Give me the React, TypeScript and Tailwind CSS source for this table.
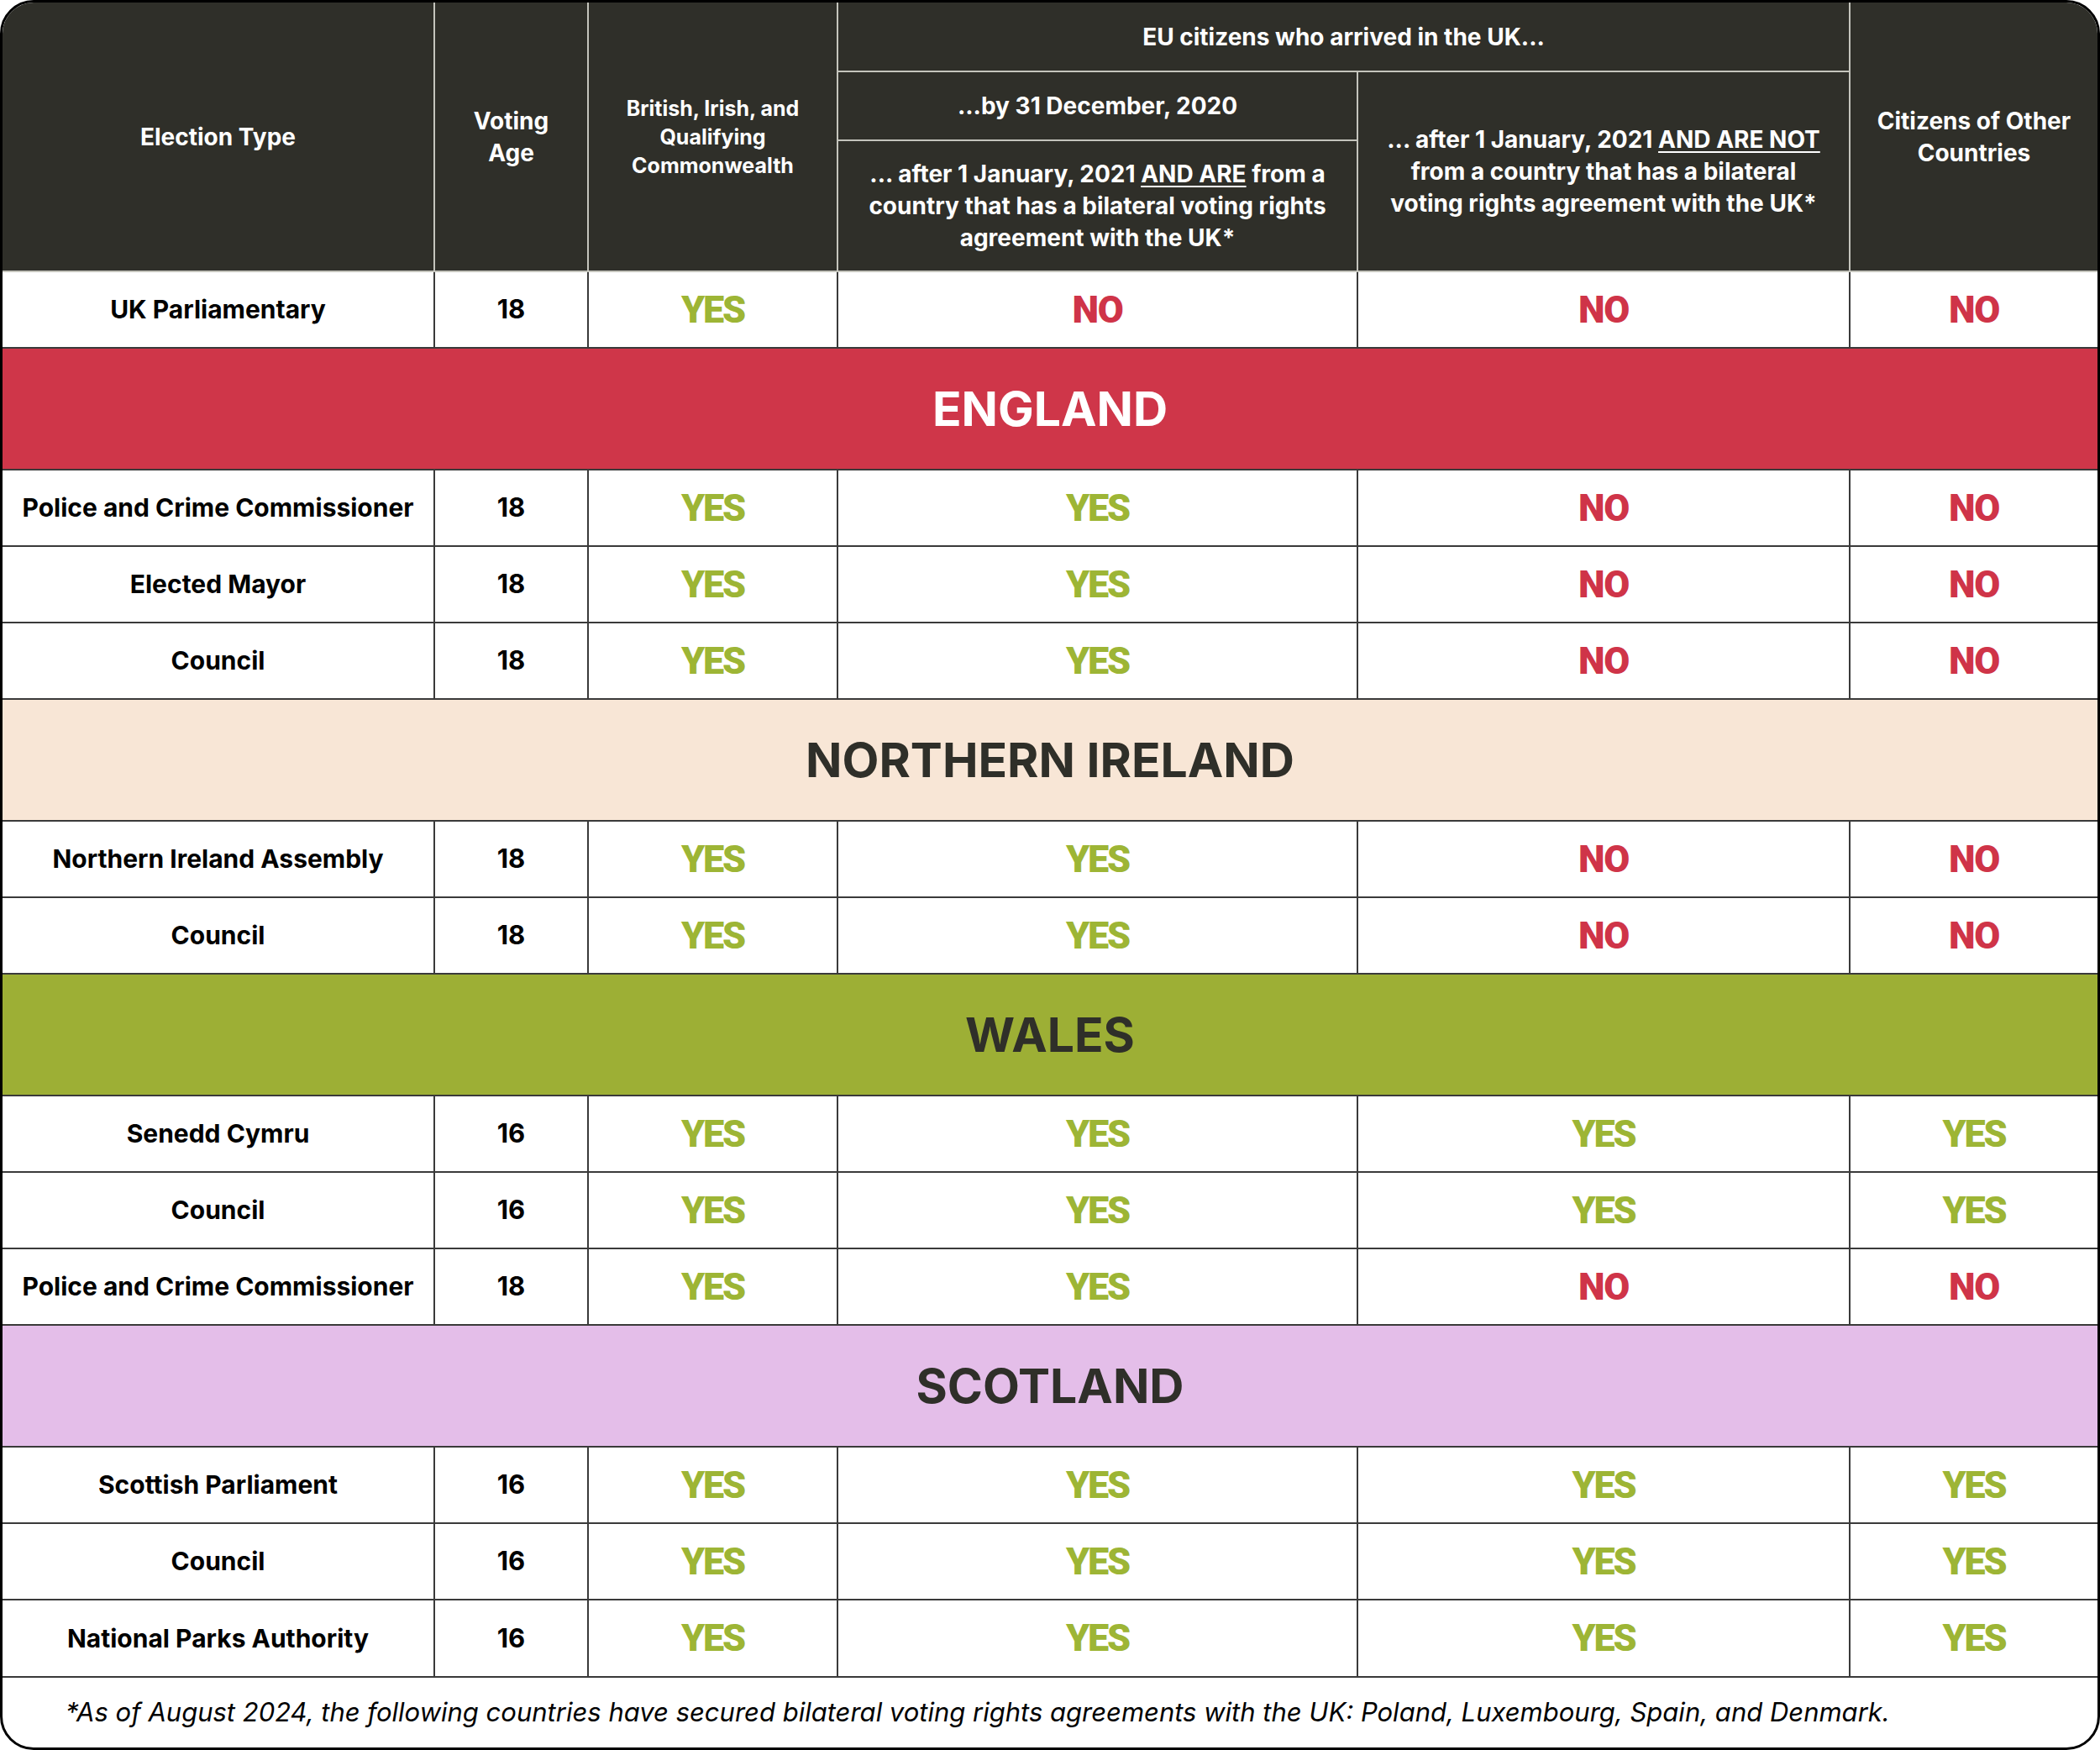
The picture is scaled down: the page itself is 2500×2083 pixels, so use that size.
import React from 'react';

type Vote = 'Y' | 'N';

interface DataRow {
  label: string;
  age: number;
  votes: Vote[];
}

interface Section {
  title?: string;
  band?: string;
  ink?: string;
  rows: DataRow[];
}

const sections: Section[] = [
  { rows: [{ label: 'UK Parliamentary', age: 18, votes: ['Y', 'N', 'N', 'N'] }] },
  {
    title: 'ENGLAND',
    band: 'bg-[#cf3649]',
    ink: 'text-white',
    rows: [
      { label: 'Police and Crime Commissioner', age: 18, votes: ['Y', 'Y', 'N', 'N'] },
      { label: 'Elected Mayor', age: 18, votes: ['Y', 'Y', 'N', 'N'] },
      { label: 'Council', age: 18, votes: ['Y', 'Y', 'N', 'N'] },
    ],
  },
  {
    title: 'NORTHERN IRELAND',
    band: 'bg-[#f8e6d6]',
    ink: 'text-[#2f2f29]',
    rows: [
      { label: 'Northern Ireland Assembly', age: 18, votes: ['Y', 'Y', 'N', 'N'] },
      { label: 'Council', age: 18, votes: ['Y', 'Y', 'N', 'N'] },
    ],
  },
  {
    title: 'WALES',
    band: 'bg-[#9daf35]',
    ink: 'text-[#2f2f29]',
    rows: [
      { label: 'Senedd Cymru', age: 16, votes: ['Y', 'Y', 'Y', 'Y'] },
      { label: 'Council', age: 16, votes: ['Y', 'Y', 'Y', 'Y'] },
      { label: 'Police and Crime Commissioner', age: 18, votes: ['Y', 'Y', 'N', 'N'] },
    ],
  },
  {
    title: 'SCOTLAND',
    band: 'bg-[#e4bee9]',
    ink: 'text-[#2f2f29]',
    rows: [
      { label: 'Scottish Parliament', age: 16, votes: ['Y', 'Y', 'Y', 'Y'] },
      { label: 'Council', age: 16, votes: ['Y', 'Y', 'Y', 'Y'] },
      { label: 'National Parks Authority', age: 16, votes: ['Y', 'Y', 'Y', 'Y'] },
    ],
  },
];

const th = 'border-2 border-[#c4c4bc] bg-[#2f2f29] text-white font-bold text-center align-middle px-2';
const td = 'border-2 border-[#3a3a3a] text-center align-middle h-[91px]';

const VoteMark = ({ v }: { v: Vote }) =>
  v === 'Y' ? (
    <span className="font-['Roboto',sans-serif] font-black text-[45px] tracking-[-0.05em] text-[#9db535]">YES</span>
  ) : (
    <span className="font-['Roboto',sans-serif] font-black text-[45px] tracking-[-0.03em] text-[#cf3448]">NO</span>
  );

export default function App() {
  return (
    <div className="w-[2500px] h-[2083px] bg-white font-['Inter',sans-serif]">
      <div className="h-full rounded-[40px] border-[3px] border-black overflow-hidden flex flex-col">
        <table className="w-full table-fixed border-collapse border-hidden">
          <colgroup>
            <col className="w-[514px]" />
            <col className="w-[183px]" />
            <col className="w-[297px]" />
            <col className="w-[619px]" />
            <col className="w-[586px]" />
            <col />
          </colgroup>
          <thead>
            <tr>
              <th rowSpan={3} className={`${th} text-[28px]`}>Election Type</th>
              <th rowSpan={3} className={`${th} text-[28px] leading-[38px]`}>
                Voting
                <br />
                Age
              </th>
              <th rowSpan={3} className={`${th} text-[25px] leading-[34px]`}>
                British, Irish, and
                <br />
                Qualifying
                <br />
                Commonwealth
              </th>
              <th colSpan={2} className={`${th} h-[82px] text-[28px]`}>EU citizens who arrived in the UK...</th>
              <th rowSpan={3} className={`${th} text-[28px] leading-[38px]`}>
                Citizens of Other
                <br />
                Countries
              </th>
            </tr>
            <tr>
              <th className={`${th} h-[82px] text-[28px]`}>...by 31 December, 2020</th>
              <th rowSpan={2} className={`${th} text-[28px] leading-[38px] whitespace-nowrap`}>
                ... after 1 January, 2021 <span className="underline underline-offset-4">AND ARE NOT</span>
                <br />
                from a country that has a bilateral
                <br />
                voting rights agreement with the UK*
              </th>
            </tr>
            <tr>
              <th className={`${th} h-[156px] text-[28px] leading-[38px] whitespace-nowrap`}>
                ... after 1 January, 2021 <span className="underline underline-offset-4">AND ARE</span> from a
                <br />
                country that has a bilateral voting rights
                <br />
                agreement with the UK*
              </th>
            </tr>
          </thead>
          <tbody>
            {sections.map((s, i) => (
              <React.Fragment key={i}>
                {s.title && (
                  <tr>
                    <td
                      colSpan={6}
                      className={`border-2 border-[#3a3a3a] h-[145px] text-center align-middle text-[57px] font-bold ${s.band} ${s.ink}`}
                    >
                      {s.title}
                    </td>
                  </tr>
                )}
                {s.rows.map((r, j) => (
                  <tr key={j}>
                    <td className={`${td} text-[30px] font-bold text-black whitespace-nowrap`}>{r.label}</td>
                    <td className={`${td} text-[31px] font-bold text-black`}>{r.age}</td>
                    {r.votes.map((v, k) => (
                      <td key={k} className={td}>
                        <VoteMark v={v} />
                      </td>
                    ))}
                  </tr>
                ))}
              </React.Fragment>
            ))}
          </tbody>
        </table>
        <div className="flex-1 flex items-center pl-[75px] border-t-2 border-[#3a3a3a] text-[31px] italic text-black whitespace-nowrap">
          *As of August 2024, the following countries have secured bilateral voting rights agreements with the UK: Poland,
          Luxembourg, Spain, and Denmark.
        </div>
      </div>
    </div>
  );
}
